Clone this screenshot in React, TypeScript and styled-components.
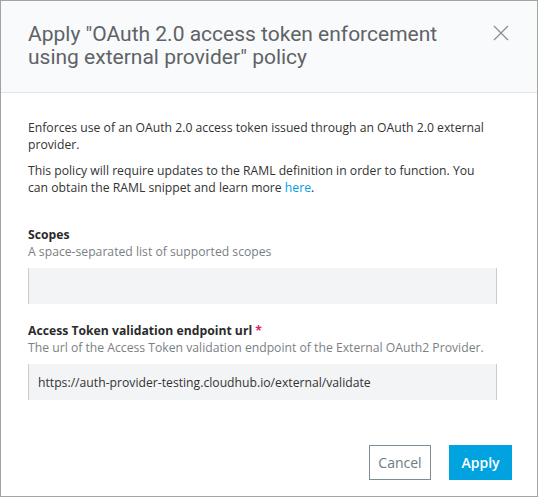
import React from "react";
import styled, { createGlobalStyle } from "styled-components";

const Global = createGlobalStyle`
  html, body { margin: 0; padding: 0; background: #fff; }
  * { box-sizing: border-box; }
`;

const Modal = styled.div`
  width: 538px;
  height: 497px;
  border: 1px solid #a3a3a3;
  display: flex;
  flex-direction: column;
  background: #fff;
  font-family: "Open Sans", sans-serif;
`;

const Header = styled.div`
  background: #f9fafb;
  border-bottom: 1px solid #e3e4e6;
  padding: 22px 28px 23px 27px;
  display: flex;
  justify-content: space-between;
  align-items: flex-start;
`;

const Title = styled.h1`
  margin: 0;
  font-family: "Roboto", sans-serif;
  font-weight: 400;
  font-size: 21px;
  line-height: 23px;
  color: #5f6367;
  width: 440px;
`;

const Close = styled.button`
  border: 0;
  background: transparent;
  padding: 0;
  margin-top: 2px;
  width: 16px;
  height: 16px;
  cursor: pointer;
  display: flex;
`;

const Body = styled.div`
  flex: 1;
  padding: 26px 40px 0 27px;
  display: flex;
  flex-direction: column;
`;

const Para = styled.p`
  margin: 0 0 9px;
  padding-right: 8px;
  font-size: 12.2px;
  line-height: 17px;
  color: #333;
`;

const Link = styled.a`
  color: #00a2df;
  text-decoration: none;
`;

const Field = styled.div<{ $top: number }>`
  margin-top: ${(p) => p.$top}px;
  display: flex;
  flex-direction: column;
`;

const Label = styled.label`
  font-size: 12.2px;
  font-weight: 700;
  line-height: 17px;
  color: #2b2b2b;
`;

const Req = styled.span`
  color: #e0245e;
`;

const Help = styled.div`
  font-size: 12.2px;
  line-height: 17px;
  color: #7b7f83;
`;

const Input = styled.input`
  margin-top: 8px;
  height: 36px;
  width: 100%;
  background: #f3f4f6;
  border: 0;
  border-left: 1px solid #c9cbcd;
  border-right: 1px solid #c9cbcd;
  padding: 0 9px;
  font-family: "Open Sans", sans-serif;
  font-size: 12.2px;
  color: #333;
  outline: none;
`;

const Footer = styled.div`
  display: flex;
  justify-content: flex-end;
  gap: 18px;
  padding: 0 25px 16px 0;
`;

const Button = styled.button<{ $primary?: boolean }>`
  height: 35px;
  width: ${(p) => (p.$primary ? 63 : 62)}px;
  padding: 0;
  font-family: "Open Sans", sans-serif;
  font-size: 14px;
  cursor: pointer;
  border: 1px solid ${(p) => (p.$primary ? "#00a2df" : "#7c8f98")};
  background: ${(p) => (p.$primary ? "#00a2df" : "#fff")};
  color: ${(p) => (p.$primary ? "#fff" : "#6e7b84")};
  font-weight: ${(p) => (p.$primary ? 600 : 400)};
`;

export default function App() {
  return (
    <>
      <Global />
      <Modal>
        <Header>
          <Title>Apply "OAuth 2.0 access token enforcement using external provider" policy</Title>
          <Close aria-label="Close">
            <svg width="16" height="16" viewBox="0 0 16 16">
              <path d="M1 1 L15 15 M15 1 L1 15" stroke="#8a8d90" strokeWidth="1.2" fill="none" />
            </svg>
          </Close>
        </Header>
        <Body>
          <Para>Enforces use of an OAuth 2.0 access token issued through an OAuth 2.0 external provider.</Para>
          <Para>
            This policy will require updates to the RAML definition in order to function. You can obtain the RAML
            snippet and learn more <Link href="#">here</Link>.
          </Para>
          <Field $top={21}>
            <Label>Scopes</Label>
            <Help>A space-separated list of supported scopes</Help>
            <Input defaultValue="" />
          </Field>
          <Field $top={18}>
            <Label>
              Access Token validation endpoint url <Req>*</Req>
            </Label>
            <Help>The url of the Access Token validation endpoint of the External OAuth2 Provider.</Help>
            <Input defaultValue="https://auth-provider-testing.cloudhub.io/external/validate" />
          </Field>
        </Body>
        <Footer>
          <Button>Cancel</Button>
          <Button $primary>Apply</Button>
        </Footer>
      </Modal>
    </>
  );
}
